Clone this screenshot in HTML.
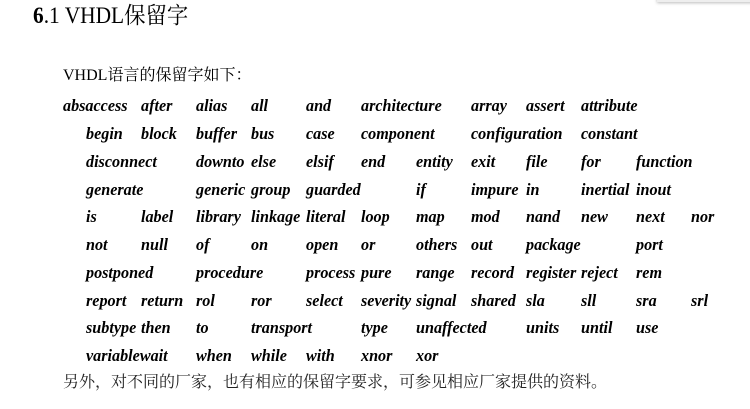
<!DOCTYPE html>
<html><head><meta charset="utf-8">
<style>
body{margin:0;width:750px;height:409px;background:#fff;position:relative;overflow:hidden;font-family:"Liberation Serif","Noto Serif CJK SC",serif;color:#000}
.sh{position:absolute;left:657px;top:-6px;width:100px;height:8px;background:#eee;box-shadow:0 1px 3px #bbb}
h1{position:absolute;left:33px;top:2px;margin:0;font-weight:normal;font-size:23px;line-height:28px;transform:scaleX(0.93);transform-origin:left}
.p{position:absolute;font-size:16px;line-height:20px;font-family:"Liberation Serif","Noto Serif CJK SC",serif}
.w{position:absolute;font-family:"Liberation Serif","DejaVu Serif",serif;font-weight:bold;font-style:italic;font-size:17px;line-height:20px;transform:scaleX(0.95);transform-origin:left;white-space:nowrap}
</style></head><body>
<div class="sh"></div>
<h1><b>6</b>.1 VHDL保留字</h1>
<div class="p" style="left:63px;top:66px">VHDL语言的保留字如下：</div>
<div id="g"></div>
<div class="p" style="left:63px;top:373px;color:#222">另外，对不同的厂家，也有相应的保留字要求，可参见相应厂家提供的资料。</div>
<script>
var rows=[
[[63,"absaccess"],[141,"after"],[196,"alias"],[251,"all"],[306,"and"],[361,"architecture"],[471,"array"],[526,"assert"],[581,"attribute"]],
[[86,"begin"],[141,"block"],[196,"buffer"],[251,"bus"],[306,"case"],[361,"component"],[471,"configuration"],[581,"constant"]],
[[86,"disconnect"],[196,"downto"],[251,"else"],[306,"elsif"],[361,"end"],[416,"entity"],[471,"exit"],[526,"file"],[581,"for"],[636,"function"]],
[[86,"generate"],[196,"generic"],[251,"group"],[306,"guarded"],[416,"if"],[471,"impure"],[526,"in"],[581,"inertial"],[636,"inout"]],
[[86,"is"],[141,"label"],[196,"library"],[251,"linkage"],[306,"literal"],[361,"loop"],[416,"map"],[471,"mod"],[526,"nand"],[581,"new"],[636,"next"],[691,"nor"]],
[[86,"not"],[141,"null"],[196,"of"],[251,"on"],[306,"open"],[361,"or"],[416,"others"],[471,"out"],[526,"package"],[636,"port"]],
[[86,"postponed"],[196,"procedure"],[306,"process"],[361,"pure"],[416,"range"],[471,"record"],[526,"register"],[581,"reject"],[636,"rem"]],
[[86,"report"],[141,"return"],[196,"rol"],[251,"ror"],[306,"select"],[361,"severity"],[416,"signal"],[471,"shared"],[526,"sla"],[581,"sll"],[636,"sra"],[691,"srl"]],
[[86,"subtype"],[141,"then"],[196,"to"],[251,"transport"],[361,"type"],[416,"unaffected"],[526,"units"],[581,"until"],[636,"use"]],
[[86,"variablewait"],[196,"when"],[251,"while"],[306,"with"],[361,"xnor"],[416,"xor"]]];
var ys=[106,134,162,190,217,245,273,301,328,356],h="";
rows.forEach(function(r,i){r.forEach(function(w){h+='<div class="w" style="left:'+w[0]+'px;top:'+(ys[i]-10)+'px">'+w[1]+'</div>';});});
document.getElementById("g").innerHTML=h;
</script>
</body></html>
